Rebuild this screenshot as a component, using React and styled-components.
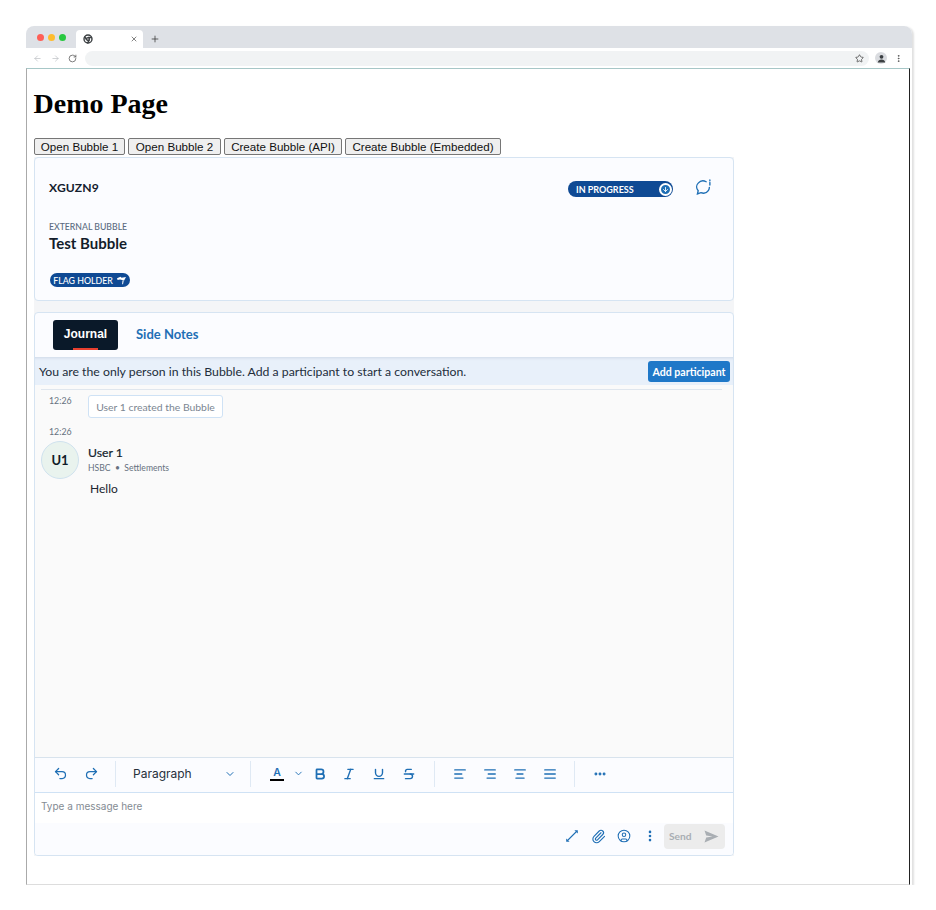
import React from "react";
import styled, { createGlobalStyle } from "styled-components";
import {
  ArrowLeft, ArrowRight, RotateCw, Star, X, Plus, Undo2, Redo2, ChevronDown, Bold, Italic,
  Underline, Strikethrough, AlignLeft, AlignRight, AlignCenter, AlignJustify, Ellipsis,
  Paperclip, CircleUser, EllipsisVertical, ArrowDown,
} from "lucide-react";

const Global = createGlobalStyle`
  html, body { margin: 0; padding: 0; background: #fff; }
`;
const Lato = `Lato, "Liberation Sans", sans-serif`;
const blue = "#1f6fb5";

const BrowserWindow = styled.div`
  margin: 26px 0 0 26px; width: 886px; height: 859px; display: flex; flex-direction: column;
  border-radius: 8px 8px 0 0; box-shadow: 2px 1px 2px rgba(0,0,0,.12);
`;
const TabStrip = styled.div`
  height: 22px; background: #dee1e6; border-radius: 8px 8px 0 0; display: flex; align-items: flex-end;
  padding-left: 50px; position: relative; flex: none;
`;
const Lights = styled.div`
  position: absolute; left: 11px; top: 8px; display: flex; gap: 4px;
`;
const Light = styled.span`
  width: 7px; height: 7px; border-radius: 50%; background: ${p => p.$c};
`;
const Tab = styled.div`
  width: 67px; height: 18px; background: #fff; border-radius: 4px 4px 0 0; display: flex; align-items: center;
  justify-content: space-between; padding: 0 5px 0 7px; box-sizing: border-box; color: #444;
`;
const NewTab = styled.div`
  margin-left: 7px; height: 18px; display: flex; align-items: center; color: #333;
`;
const AddressBar = styled.div`
  height: 20px; background: #fff; display: flex; align-items: center; padding-left: 7px; flex: none; color: #555;
`;
const NavIcons = styled.div`
  display: flex; gap: 8.5px; width: 52px; align-items: center;
  svg:nth-child(-n+2) { color: #b9bcc0; }
`;
const Omnibox = styled.div`
  width: 784px; height: 15px; background: #f1f3f4; border-radius: 8px; display: flex; align-items: center;
  justify-content: flex-end; padding-right: 5px; box-sizing: border-box; color: #444;
`;
const Profile = styled.div`
  width: 12px; height: 12px; border-radius: 50%; background: #dadce0; margin-left: 6px; display: flex;
  align-items: center; justify-content: center; color: #3c4043;
`;
const Kebab = styled.div`
  margin-left: 7px; display: flex; color: #555;
`;
const Viewport = styled.div`
  flex: 1; background: #fff; border-top: 1px solid #a7c7c7; border-left: 1px solid #aaa; border-right: 1px solid #222;
  border-bottom: 1px solid #ddd; margin-right: 2px; padding-left: 7px; display: flex; flex-direction: column; min-height: 0;
`;
const Title = styled.h1`
  font: bold 28px/32px "Liberation Serif", serif; margin: 19px 0 18px -0.5px; color: #000;
`;
const Buttons = styled.div`
  display: flex; gap: 3px; height: 19px; flex: none; align-items: flex-start;
`;
const NativeButton = styled.button`
  font: 11.6px "Liberation Sans", sans-serif; color: #111; background: #efefef; border: 1px solid #767676;
  border-radius: 2px; padding: 0; width: ${p => p.$w}px; height: 17px;
`;
const Stack = styled.div`
  width: 700px; background: #f4f5f7; display: flex; flex-direction: column; gap: 11px; font-family: ${Lato};
`;
const Card = styled.section`
  background: #fbfcff; border: 1px solid #d6e4f2; border-radius: 4px; box-sizing: border-box;
`;
const HeaderCard = styled(Card)`
  height: 144px; padding: 0 14px; display: flex; flex-direction: column;
`;
const TopRow = styled.div`
  display: flex; align-items: center; height: 58px; flex: none;
`;
const Code = styled.div`
  font-size: 12.1px; font-weight: 700; color: #15202e; flex: 1; letter-spacing: .1px;
`;
const StatusPill = styled.div`
  width: 105px; height: 16px; border-radius: 8px; background: #0f4a94; color: #fff; display: flex; align-items: center;
  justify-content: space-between; box-sizing: border-box; padding: 0 1px 0 8px; font-size: 9px; font-weight: 700; margin-top: 4px;
`;
const StatusKnob = styled.span`
  width: 13px; height: 13px; border-radius: 50%; background: #1f6fb5; border: 2px solid #fff; box-sizing: border-box;
  display: flex; align-items: center; justify-content: center; color: #fff;
`;
const ChatButton = styled.div`
  margin: 1px 7px 0 22px; display: flex; color: ${blue};
`;
const Eyebrow = styled.div`
  font-size: 8.7px; font-weight: 500; color: #5a6b80; line-height: 10px; margin-top: 6px;
`;
const BubbleName = styled.div`
  font-size: 15px; font-weight: 700; color: #131d2b; line-height: 18px; margin-top: 2px;
`;
const FlagPill = styled.div`
  margin-top: 21px; margin-left: 1px; width: 80px; height: 14px; border-radius: 7px; background: #0f4a94; color: #fff; display: flex;
  align-items: center; justify-content: center; gap: 3px; font-size: 8.8px; font-weight: 500;
`;
const ChatCard = styled(Card)`
  height: 544px; display: flex; flex-direction: column; overflow: hidden;
`;
const Tabs = styled.div`
  height: 44px; display: flex; align-items: center; padding-left: 18px; gap: 18px; flex: none;
`;
const ActiveTab = styled.div`
  width: 65px; height: 30px; padding-bottom: 2px; box-sizing: border-box; border-radius: 3px; background: #0a1929; color: #fff;
  font: bold 12px "Liberation Sans", sans-serif; display: flex; align-items: center; justify-content: center; position: relative;
  &::after { content: ""; position: absolute; left: 20px; bottom: 0; width: 25px; height: 2px; background: #e8402f; }
`;
const SideTab = styled.div`
  font-size: 13px; font-weight: 700; color: ${blue}; padding-bottom: 2px;
`;
const Banner = styled.div`
  height: 28px; background: #e8f0fa; display: flex; align-items: center; justify-content: space-between; padding: 0 3px 0 4px;
  font-size: 12.25px; color: #222d3a; flex: none; box-shadow: inset 0 3px 3px -2px rgba(60,90,130,.15);
`;
const AddButton = styled.div`
  width: 82px; height: 21px; margin-top: 1px; border-radius: 3px; background: #1f78c8; color: #fff; font-size: 10.6px; font-weight: 700;
  display: flex; align-items: center; justify-content: center;
`;
const Feed = styled.div`
  flex: 1; background: #fafafa; padding: 4px 6px 0; min-height: 0; box-sizing: border-box;
`;
const Rule = styled.div`
  height: 1px; background: #dfe6ee; margin: 0 5px 5px 0;
`;
const EventRow = styled.div`
  display: flex; align-items: flex-start;
`;
const Time = styled.div`
  font-size: 8.8px; color: #66717f; width: 47px; padding-left: 8px; box-sizing: border-box; line-height: 10px; margin-top: ${p => p.$top || 0}px;
`;
const EventBox = styled.div`
  width: 135px; height: 23px; box-sizing: border-box; background: #fff; border: 1px solid #cfe2f5; border-radius: 3px;
  color: #7b8692; font-size: 10.4px; display: flex; align-items: center; justify-content: center;
`;
const MsgTime = styled(Time)`
  margin-top: 9px;
`;
const Message = styled.div`
  display: flex; gap: 9px; margin-top: 4px;
`;
const Avatar = styled.div`
  width: 38px; height: 38px; border-radius: 50%; background: #e9f3ee; border: 1px solid #cfe2ee; box-sizing: border-box;
  display: flex; align-items: center; justify-content: center; font-size: 13px; font-weight: 700; color: #111b28; flex: none;
`;
const MsgBody = styled.div`
  padding-top: 5px; display: flex; flex-direction: column;
`;
const Name = styled.div`
  font-size: 12.2px; font-weight: 400; color: #131d2b; line-height: 13px; -webkit-text-stroke: .2px #131d2b;
`;
const Org = styled.div`
  font-size: 8.6px; color: #66717f; line-height: 10px; margin-top: 4px;
`;
const Text = styled.div`
  font-size: 12px; color: #1c2530; margin: 8px 0 0 2px; line-height: 15px;
`;
const Toolbar = styled.div`
  height: 36px; background: #fbfcff; border-top: 1px solid #d8e3ed; border-bottom: 1px solid #cfe2f5; display: flex; align-items: center;
  flex: none; box-sizing: border-box; color: ${blue}; padding-bottom: 3px;
`;
const ToolGroup = styled.div`
  width: ${p => p.$w}px; display: flex; align-items: center; justify-content: ${p => p.$j || "flex-start"}; gap: ${p => p.$gap || 0}px;
  padding-left: ${p => p.$pl || 0}px; box-sizing: border-box; height: 26px; flex: none;
  border-right: ${p => p.$noline ? "none" : "1px solid #dfe9f4"};
`;
const ParagraphLabel = styled.span`
  font: 12px Inter, "Liberation Sans", sans-serif; color: #27303b; width: 91px;
`;
const ColorA = styled.span`
  display: flex; flex-direction: column; align-items: center; width: 14px; font: 600 10.5px/11px Inter, sans-serif; color: ${blue};
  &::after { content: ""; width: 14px; height: 2px; background: #000; margin-top: 1px; }
`;
const FormatIcon = styled.span`
  display: flex; margin-right: ${p => p.$mr || 0}px;
`;
const Composer = styled.div`
  flex: none; height: 62px; background: #fbfcff; display: flex; flex-direction: column;
`;
const InputLine = styled.div`
  height: 30px; background: #fff; font: 10px Inter, "Liberation Sans", sans-serif; color: #848b93; padding: 7px 0 0 6px; box-sizing: border-box;
`;
const Actions = styled.div`
  display: flex; align-items: center; justify-content: flex-end; padding-right: 8px; height: 26px; color: ${blue};
`;
const ActionIcon = styled.span`
  display: flex; width: 26px; justify-content: center;
`;
const SendButton = styled.div`
  width: 61px; height: 25px; border-radius: 4px; background: #ececec; color: #a9aeb3; font-size: 10.2px; font-weight: 700;
  display: flex; align-items: center; justify-content: space-between; padding: 0 6px 0 5px; box-sizing: border-box; margin-left: 1px;
`;

const Chrome = () => (
  <svg width="10" height="10" viewBox="0 0 24 24" fill="none" stroke="#3c4043" strokeWidth="3.4">
    <circle cx="12" cy="12" r="9.6" /><circle cx="12" cy="12" r="3.4" />
    <path d="M12 8.2h9.6M8.7 14 3.9 5.7M15.3 14l-4.8 8.3" />
  </svg>
);
const ChatIcon = () => (
  <svg width="17" height="17" viewBox="0 0 16 16" fill="none" stroke="currentColor" strokeWidth="1.3" strokeLinecap="round">
    <path d="M10.5 2.6A6 5.8 0 0 0 3 3.9C1 6 1.2 9 3 11l-.7 3 3.2-1.1c2.7.9 5.6.2 7-1.9.7-1 1-2 1-3" />
    <path d="M14 1v.6M14 3.2v2.4" />
  </svg>
);
const FlagIcon = () => (
  <svg width="11" height="9" viewBox="0 0 11 9" fill="#fff">
    <path d="M1 2.2 4.5.8l1 1L10 1 8 4.8 6 4 4 3.6 1.6 4z" /><path d="M6.5 4.5 7.6 5 7 8.4 6.2 8z" />
  </svg>
);
const SendIcon = () => (
  <svg width="15" height="13" viewBox="0 0 15 13" fill="currentColor">
    <path d="M.5.5 14.5 6.5.5 12.5 2.2 7.6 8.6 6.5 2.2 5.4z" />
  </svg>
);
const ExpandIcon = () => (
  <svg width="14" height="14" viewBox="0 0 14 14" fill="none" stroke="currentColor" strokeWidth="1.1">
    <path d="M2.5 11.5 11.5 2.5" />
    <path d="M9.4 1.2h3.4v3.4z" fill="currentColor" stroke="none" />
    <path d="M1.2 9.4v3.4h3.4z" fill="currentColor" stroke="none" />
  </svg>
);
const PersonIcon = () => (
  <svg width="9" height="9" viewBox="0 0 9 9" fill="currentColor">
    <circle cx="4.5" cy="2.8" r="1.9" /><path d="M.8 8.5C1 6.2 2.6 5.4 4.5 5.4s3.5.8 3.7 3.1z" />
  </svg>
);

export default function App() {
  const s = { size: 15, strokeWidth: 2 };
  const f = { size: 14, strokeWidth: 2.4 };
  return (
    <>
      <Global />
      <BrowserWindow>
        <TabStrip>
          <Lights><Light $c="#ff5f57" /><Light $c="#febc2e" /><Light $c="#28c840" /></Lights>
          <Tab><Chrome /><X size={8} strokeWidth={2} /></Tab>
          <NewTab><Plus size={10} strokeWidth={1.8} /></NewTab>
        </TabStrip>
        <AddressBar>
          <NavIcons>
            <ArrowLeft size={9} strokeWidth={1.8} />
            <ArrowRight size={9} strokeWidth={1.8} />
            <RotateCw size={9} strokeWidth={2} />
          </NavIcons>
          <Omnibox><Star size={9} strokeWidth={2} /></Omnibox>
          <Profile><PersonIcon /></Profile>
          <Kebab><EllipsisVertical size={9} strokeWidth={2.5} /></Kebab>
        </AddressBar>
        <Viewport>
          <Title>Demo Page</Title>
          <Buttons>
            <NativeButton $w={91}>Open Bubble 1</NativeButton>
            <NativeButton $w={93}>Open Bubble 2</NativeButton>
            <NativeButton $w={118}>Create Bubble (API)</NativeButton>
            <NativeButton $w={156}>Create Bubble (Embedded)</NativeButton>
          </Buttons>
          <Stack>
            <HeaderCard>
              <TopRow>
                <Code>XGUZN9</Code>
                <StatusPill>IN PROGRESS<StatusKnob><ArrowDown size={7} strokeWidth={3} /></StatusKnob></StatusPill>
                <ChatButton><ChatIcon /></ChatButton>
              </TopRow>
              <Eyebrow>EXTERNAL BUBBLE</Eyebrow>
              <BubbleName>Test Bubble</BubbleName>
              <FlagPill>FLAG HOLDER<FlagIcon /></FlagPill>
            </HeaderCard>
            <ChatCard>
              <Tabs>
                <ActiveTab>Journal</ActiveTab>
                <SideTab>Side Notes</SideTab>
              </Tabs>
              <Banner>
                You are the only person in this Bubble. Add a participant to start a conversation.
                <AddButton>Add participant</AddButton>
              </Banner>
              <Feed>
                <Rule />
                <EventRow>
                  <Time $top={1}>12:26</Time>
                  <EventBox>User 1 created the Bubble</EventBox>
                </EventRow>
                <MsgTime>12:26</MsgTime>
                <Message>
                  <Avatar>U1</Avatar>
                  <MsgBody>
                    <Name>User 1</Name>
                    <Org>HSBC &nbsp;•&nbsp; Settlements</Org>
                    <Text>Hello</Text>
                  </MsgBody>
                </Message>
              </Feed>
              <Toolbar>
                <ToolGroup $w={81} $pl={18} $gap={16}><Undo2 {...s} /><Redo2 {...s} /></ToolGroup>
                <ToolGroup $w={135} $pl={17}><ParagraphLabel>Paragraph</ParagraphLabel><ChevronDown size={12} strokeWidth={2} /></ToolGroup>
                <ToolGroup $w={184} $pl={19}>
                  <ColorA>A</ColorA>
                  <FormatIcon $mr={9}><ChevronDown size={11} strokeWidth={2} style={{ marginLeft: 9 }} /></FormatIcon>
                  <FormatIcon $mr={15}><Bold {...f} strokeWidth={3} /></FormatIcon>
                  <FormatIcon $mr={16}><Italic {...f} /></FormatIcon>
                  <FormatIcon $mr={16}><Underline {...f} /></FormatIcon>
                  <Strikethrough {...f} />
                </ToolGroup>
                <ToolGroup $w={140} $pl={18} $gap={16}>
                  <AlignLeft {...f} /><AlignRight {...f} /><AlignCenter {...f} /><AlignJustify {...f} />
                </ToolGroup>
                <ToolGroup $w={60} $pl={18} $noline><Ellipsis size={14} strokeWidth={3} /></ToolGroup>
              </Toolbar>
              <Composer>
                <InputLine>Type a message here</InputLine>
                <Actions>
                  <ActionIcon><ExpandIcon /></ActionIcon>
                  <ActionIcon><Paperclip size={15} strokeWidth={1.8} /></ActionIcon>
                  <ActionIcon><CircleUser size={14} strokeWidth={1.8} /></ActionIcon>
                  <ActionIcon><EllipsisVertical size={14} strokeWidth={2.5} /></ActionIcon>
                  <SendButton>Send<SendIcon /></SendButton>
                </Actions>
              </Composer>
            </ChatCard>
          </Stack>
        </Viewport>
      </BrowserWindow>
    </>
  );
}
